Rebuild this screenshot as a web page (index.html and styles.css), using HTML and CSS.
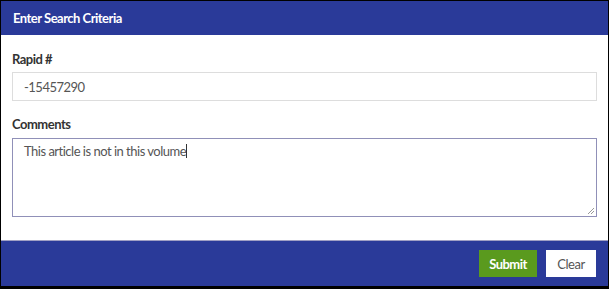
FILE: index.html
```html
<!DOCTYPE html>
<html lang="en">
<head>
    <meta charset="UTF-8">
    <meta name="viewport" content="width=device-width, initial-scale=1.0">
    <title>Enter Search Criteria</title>
    <link rel="stylesheet" href="styles.css">
</head>
<body>
    <div class="panel">
        <div class="panel-header">Enter Search Criteria</div>

        <div class="panel-body">
            <div class="field">
                <label class="field-label" for="rapid-no">Rapid #</label>
                <input class="field-input" id="rapid-no" type="text" value="-15457290">
            </div>

            <div class="field">
                <label class="field-label" for="comments">Comments</label>
                <div class="field-area" id="comments">This article is not in this volume<span class="caret"></span></div>
            </div>
        </div>

        <div class="panel-footer">
            <button class="btn btn-submit">Submit</button>
            <button class="btn btn-clear">Clear</button>
        </div>
    </div>
</body>
</html>
```

FILE: styles.css
```css
* {
    box-sizing: border-box;
    margin: 0;
    padding: 0;
    font-family: 'Lato', 'Open Sans', sans-serif;
    letter-spacing: -0.5px;
}

body {
    background: #000;
    padding: 1px 1px 3px 1px;
    height: 289px;
    overflow: hidden;
}

.panel {
    background: #fff;
    height: 285px;
    display: flex;
    flex-direction: column;
}

.panel-header {
    background: #2a3a99;
    color: #fff;
    height: 34px;
    padding: 0 12px;
    display: flex;
    align-items: center;
    font-size: 13px;
    font-weight: 700;
}

.panel-body {
    flex: 1;
    padding: 16px 11px 0 11px;
}

.field {
    margin-bottom: 15px;
}

.field-label {
    display: block;
    font-size: 13px;
    line-height: 16px;
    font-weight: 700;
    color: #333;
    margin-bottom: 5px;
}

.field-input {
    display: block;
    width: 100%;
    height: 29px;
    border: 1px solid #ddd;
    padding: 0 11px;
    font-size: 13px;
    color: #555;
    outline: none;
}

.field-area {
    position: relative;
    width: 100%;
    height: 79px;
    margin-top: 6px;
    border: 1px solid #9090b8;
    padding: 4px 11px;
    font-size: 13px;
    line-height: 16px;
    color: #555;
}

.field-area::after {
    content: '';
    position: absolute;
    right: 2px;
    bottom: 2px;
    width: 6px;
    height: 6px;
    background: linear-gradient(135deg, transparent 45%, #999 45%, #999 55%, transparent 55%, transparent 70%, #999 70%, #999 80%, transparent 80%);
}

.caret {
    display: inline-block;
    width: 1px;
    height: 14px;
    background: #333;
    vertical-align: -2px;
}

.panel-footer {
    background: #2a3a99;
    border-top: 1px solid #a0a0c4;
    height: 46px;
    padding: 0 12px;
    display: flex;
    align-items: center;
    justify-content: flex-end;
    gap: 9px;
}

.btn {
    height: 27px;
    border: none;
    font-size: 13px;
    cursor: pointer;
}

.btn-submit {
    background: #5a9a1e;
    color: #fff;
    font-weight: 700;
    width: 58px;
}

.btn-clear {
    background: #fff;
    color: #555;
    width: 50px;
}
```
